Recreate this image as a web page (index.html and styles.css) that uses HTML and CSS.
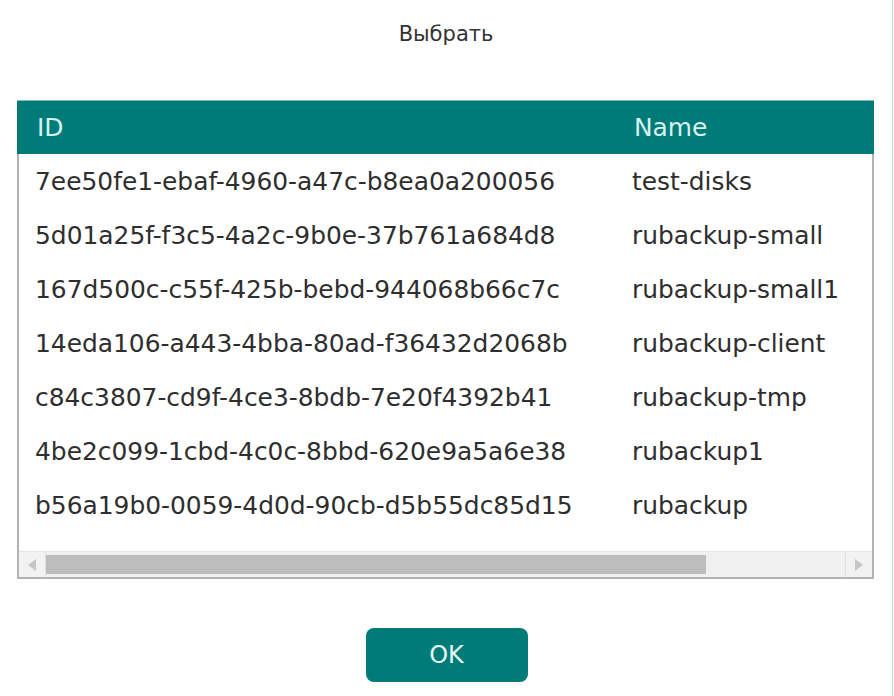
FILE: index.html
```html
<!DOCTYPE html>
<html lang="ru">
<head>
<meta charset="utf-8">
<title>Выбрать</title>
<link rel="stylesheet" href="styles.css">
</head>
<body>
<div class="dialog">
  <h1 class="title">Выбрать</h1>
  <div class="table">
    <div class="row head">
      <div class="cell id">ID</div>
      <div class="cell name">Name</div>
    </div>
    <div class="body">
      <div class="row"><div class="cell id">7ee50fe1-ebaf-4960-a47c-b8ea0a200056</div><div class="cell name">test-disks</div></div>
      <div class="row"><div class="cell id">5d01a25f-f3c5-4a2c-9b0e-37b761a684d8</div><div class="cell name">rubackup-small</div></div>
      <div class="row"><div class="cell id">167d500c-c55f-425b-bebd-944068b66c7c</div><div class="cell name">rubackup-small1</div></div>
      <div class="row"><div class="cell id">14eda106-a443-4bba-80ad-f36432d2068b</div><div class="cell name">rubackup-client</div></div>
      <div class="row"><div class="cell id">c84c3807-cd9f-4ce3-8bdb-7e20f4392b41</div><div class="cell name">rubackup-tmp</div></div>
      <div class="row"><div class="cell id">4be2c099-1cbd-4c0c-8bbd-620e9a5a6e38</div><div class="cell name">rubackup1</div></div>
      <div class="row"><div class="cell id">b56a19b0-0059-4d0d-90cb-d5b55dc85d15</div><div class="cell name">rubackup</div></div>
    </div>
    <div class="scrollbar">
      <div class="sb-btn sb-left"><span class="tri-left"></span></div>
      <div class="sb-track"><div class="sb-thumb"></div></div>
      <div class="sb-btn sb-right"><span class="tri-right"></span></div>
    </div>
  </div>
  <div class="actions">
    <button class="ok">OK</button>
  </div>
</div>
</body>
</html>
```

FILE: styles.css
```css
html, body {
  margin: 0;
  padding: 0;
  background: #ffffff;
}
body {
  font-family: "DejaVu Sans", "Liberation Sans", sans-serif;
  color: #2e2e2e;
}
.dialog {
  width: 892px;
  height: 696px;
  border-right: 1px solid #b8dfdc;
  box-sizing: content-box;
  display: flex;
  flex-direction: column;
  align-items: center;
}
.title {
  margin: 22px 0 0 0;
  font-size: 21px;
  font-weight: normal;
  line-height: 24px;
  color: #333333;
}
.table {
  margin-top: 54px;
  width: 857px;
  margin-right: 1px;
  box-sizing: border-box;
  border: 2px solid #b3b3b3;
  border-top: none;
  display: flex;
  flex-direction: column;
}
.row {
  display: grid;
  grid-template-columns: 597px 1fr;
  height: 54px;
  align-items: center;
  font-size: 24.9px;
  white-space: nowrap;
}
.cell {
  padding-left: 16px;
  overflow: hidden;
}
.head {
  background: #007b78;
  color: #d6f1ef;
  margin: 0 -2px;
  padding: 0 2px;
  border-top: 1px solid #7fbfbc;
  height: 53px;
}
.head .cell {
  padding-left: 18px;
}
.body {
  padding-bottom: 19px;
  color: #2e2e2e;
}
.scrollbar {
  display: flex;
  height: 25px;
  background: #f0f0f0;
  border-top: 1px solid #e2e2e2;
}
.sb-btn {
  width: 26px;
  display: flex;
  align-items: center;
  justify-content: center;
  background: #f2f2f2;
}
.sb-left {
  border-right: 1px solid #e0e0e0;
}
.sb-right {
  border-left: 1px solid #e0e0e0;
}
.tri-left {
  width: 0;
  height: 0;
  border-top: 6px solid transparent;
  border-bottom: 6px solid transparent;
  border-right: 8px solid #c6c6c6;
}
.tri-right {
  width: 0;
  height: 0;
  border-top: 6px solid transparent;
  border-bottom: 6px solid transparent;
  border-left: 8px solid #c6c6c6;
}
.sb-track {
  flex: 1;
  display: flex;
  align-items: center;
}
.sb-thumb {
  width: 660px;
  height: 19px;
  background: #bdbdbd;
}
.actions {
  margin-top: 49px;
  margin-left: 1px;
}
.ok {
  width: 162px;
  height: 54px;
  border: none;
  border-radius: 8px;
  background: #007b78;
  color: #e4f6f5;
  font-family: "DejaVu Sans", "Liberation Sans", sans-serif;
  font-size: 24px;
  cursor: pointer;
}
```
